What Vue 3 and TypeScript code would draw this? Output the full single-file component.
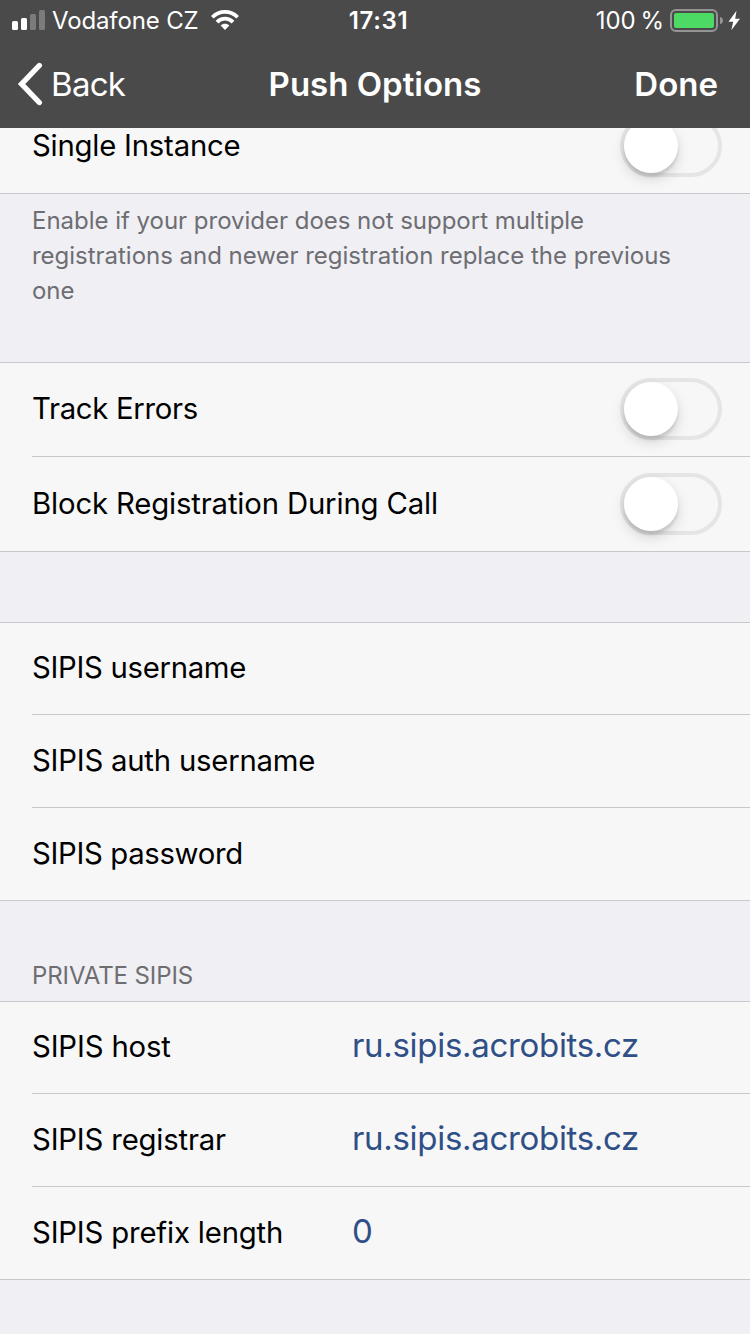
<script setup lang="ts">
interface Row {
  label: string
  kind: string
  value?: string
}

const pushRows: Row[] = [
  { label: 'Track Errors', kind: 'track' },
  { label: 'Block Registration During Call', kind: 'block' },
]
const accountRows: Row[] = [
  { label: 'SIPIS username', kind: 'user' },
  { label: 'SIPIS auth username', kind: 'auth' },
  { label: 'SIPIS password', kind: 'pass' },
]
const hostRows: Row[] = [
  { label: 'SIPIS host', kind: 'host', value: 'ru.sipis.acrobits.cz' },
  { label: 'SIPIS registrar', kind: 'registrar', value: 'ru.sipis.acrobits.cz' },
  { label: 'SIPIS prefix length', kind: 'prefix', value: '0' },
]
</script>

<template>
  <main class="screen">
    <header class="top">
      <div class="status">
        <div class="carrier">
          <svg class="signal" width="34" height="22" viewBox="0 0 34 22">
            <rect x="0" y="12" width="6" height="9" rx="1.5" fill="#fff" />
            <rect x="9" y="9" width="6" height="12" rx="1.5" fill="#fff" />
            <rect x="18" y="5" width="6" height="16" rx="1.5" fill="#7b7b7b" />
            <rect x="27" y="1" width="6" height="20" rx="1.5" fill="#7b7b7b" />
          </svg>
          <span class="carrier-name">Vodafone CZ</span>
          <svg class="wifi" width="28" height="20" viewBox="0 0 28 20">
            <g fill="none" stroke="#fff" stroke-width="3.8">
              <path d="M1.3 7.3C8.3 .1 19.7 .1 26.7 7.3" />
              <path d="M6 12.1C10.4 7.5 17.6 7.5 22 12.1" />
            </g>
            <path d="M9.6 15.5C12 13.2 16 13.2 18.4 15.5L14 20Z" fill="#fff" />
          </svg>
        </div>
        <span class="clock">17:31</span>
        <div class="power">
          <span class="percent">100 %</span>
          <svg class="battery" width="72" height="26" viewBox="0 0 72 26">
            <rect x="1" y="3" width="46" height="21" rx="5" fill="none" stroke="#949494" stroke-width="2" />
            <rect x="4" y="6" width="40" height="15" rx="2" fill="#4cd964" />
            <path d="M50 9.7Q53 10.8 53 13.5Q53 16.2 50 17.3Z" fill="#949494" />
            <path d="M66.5 3.7L58.5 14.7H63.2L61.3 23.2L70 11.7H65.2Z" fill="#fff" />
          </svg>
        </div>
      </div>
      <nav class="nav">
        <div class="back">
          <svg width="26" height="44" viewBox="0 0 26 44">
            <path d="M22.3 3.5L4.6 22L22.3 40.5" fill="none" stroke="#fff" stroke-width="5.4" stroke-linecap="round" stroke-linejoin="miter" />
          </svg>
          <span class="back-text">Back</span>
        </div>
        <h1 class="title">Push Options</h1>
        <span class="done">Done</span>
      </nav>
    </header>

    <section class="group group-first">
      <div class="row">
        <span class="label single">Single Instance</span>
        <span class="toggle"><i class="knob"></i></span>
      </div>
    </section>
    <p class="note">
      Enable if your provider does not support multiple<br />
      registrations and newer registration replace the previous<br />
      one
    </p>

    <section class="group group-push">
      <div v-for="row in pushRows" :key="row.kind" class="row">
        <span class="label" :class="row.kind">{{ row.label }}</span>
        <span class="toggle"><i class="knob"></i></span>
      </div>
    </section>

    <section class="group group-account">
      <div v-for="row in accountRows" :key="row.kind" class="row">
        <span class="label" :class="row.kind">{{ row.label }}</span>
      </div>
    </section>

    <h2 class="heading">PRIVATE SIPIS</h2>
    <section class="group group-host">
      <div v-for="row in hostRows" :key="row.kind" class="row">
        <span class="name label" :class="row.kind">{{ row.label }}</span>
        <span class="value">{{ row.value }}</span>
      </div>
    </section>
  </main>
</template>

<style>
body { background: #efeff4; }
</style>

<style scoped>
.screen {
  width: 750px;
  height: 1334px;
  overflow: hidden;
  background: #efeff4;
  color: #000;
  font-family: Inter, "Liberation Sans", sans-serif;
}
.top {
  height: 128px;
  background: #4a4a4a;
  color: #fff;
}
.status {
  display: grid;
  grid-template-columns: 1fr auto 1fr;
  align-items: center;
  box-sizing: border-box;
  height: 40px;
  padding: 0 8px 0 12px;
  font-size: 24px;
}
.carrier, .power { display: flex; align-items: center; }
.power { justify-content: flex-end; }
.signal { margin-right: 6px; }
.carrier-name { letter-spacing: -0.14px; }
.wifi { margin-left: 12.6px; }
.percent { word-spacing: -2px; }
.battery { margin-left: 6px; }
.clock { margin-left: 3px; font-weight: 600; letter-spacing: 0.7px; }
.nav {
  display: grid;
  grid-template-columns: 1fr auto 1fr;
  align-items: center;
  height: 88px;
  padding: 0 17px;
  font-size: 33px;
}
.back { display: flex; align-items: center; gap: 8px; }
.back-text { letter-spacing: -0.7px; }
.title { margin: 0; font-size: 33px; font-weight: 600; }
.done { justify-self: end; margin-right: 15px; font-weight: 600; }
.group {
  background: #f7f7f7;
  border-top: 1px solid #c8c7cc;
  border-bottom: 1px solid #c8c7cc;
}
.row {
  display: flex;
  align-items: center;
  height: 92px;
  margin-left: 32px;
  padding-right: 28px;
  font-size: 29.3px;
}
.row + .row { border-top: 1px solid #c8c7cc; }
.group-first { height: 65px; border-top: 0; overflow: hidden; }
.group-first .row { height: 94px; margin-top: -29px; }
.group-push .row { height: 92px; padding-bottom: 1px; }
.group-push .row + .row { height: 94px; padding-bottom: 0; }
.group-push { margin-top: 54px; }
.group-account { margin-top: 70px; }
.group-account .row:first-child, .group-host .row:first-child { height: 90px; padding-bottom: 1px; }
.label { padding-bottom: 1px; white-space: nowrap; }
.single { letter-spacing: -0.21px; }
.track { letter-spacing: -0.3px; }
.block { letter-spacing: -0.15px; }
.user { letter-spacing: -0.3px; }
.auth { letter-spacing: -0.21px; }
.pass { letter-spacing: -0.33px; }
.host { letter-spacing: -0.15px; }
.registrar { letter-spacing: -0.17px; }
.prefix { letter-spacing: -0.17px; }
.note {
  height: 105px;
  margin: 9px 32px 0;
  font-size: 24px;
  line-height: 35px;
  letter-spacing: -0.02px;
  color: #6d6d72;
  white-space: nowrap;
}
.heading {
  margin: 60px 32px 10px;
  font-size: 24px;
  line-height: 30px;
  font-weight: 400;
  letter-spacing: -0.1px;
  color: #6d6d72;
}
.name { width: 320px; }
.value { padding-bottom: 4px; color: #2f4f86; font-size: 33px; letter-spacing: -0.31px; }
.toggle {
  box-sizing: border-box;
  width: 102px;
  height: 62px;
  margin-left: auto;
  border: 4px solid #e5e5e5;
  border-radius: 31px;
}
.knob {
  display: block;
  width: 54px;
  height: 54px;
  border-radius: 50%;
  background: #fff;
  box-shadow: 0 6px 14px rgba(0, 0, 0, 0.14), 0 4px 3px rgba(0, 0, 0, 0.1);
}
</style>
